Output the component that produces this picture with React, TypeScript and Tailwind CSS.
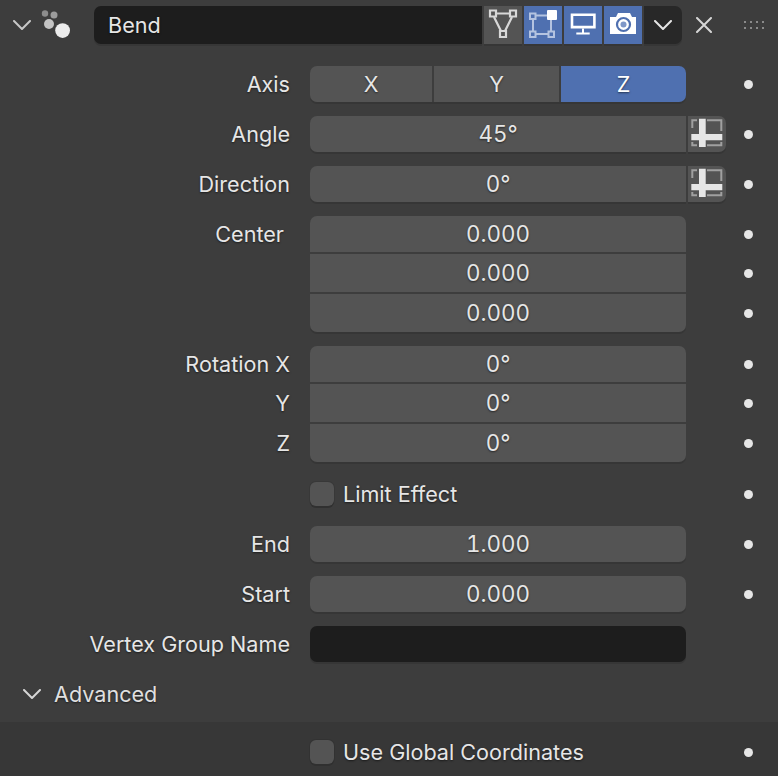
import type { ReactNode } from "react"

const textShadow = "[text-shadow:0_1px_2px_rgba(0,0,0,0.55)]"
const field = "bg-[#545454] shadow-[0_2px_0_#363636]"
const numbers = "text-[22.4px] tabular-nums"

function Chevron({ className }: { className: string }) {
  return (
    <svg viewBox="0 0 18 10" className={className} fill="none" stroke="currentColor" strokeWidth="2" strokeLinecap="round" strokeLinejoin="round">
      <path d="M1 1l8 8 8-8" />
    </svg>
  )
}

function Dot({ show = true }: { show?: boolean }) {
  return (
    <div className="ml-auto mr-[8px] flex w-[44px] shrink-0 justify-center">
      {show && <div className="h-[9px] w-[9px] rounded-full bg-[#e6e6e6]" />}
    </div>
  )
}

function Label({ children, className = "" }: { children?: ReactNode; className?: string }) {
  return <div className={`w-[290px] shrink-0 text-right text-[#e6e6e6] ${textShadow} ${className}`}>{children}</div>
}

function Row({ label, children, dot = true }: { label?: string; children: ReactNode; dot?: boolean }) {
  return (
    <div className="flex h-[36px] items-center">
      <Label>{label}</Label>
      <div className="ml-[20px] flex items-center">{children}</div>
      <Dot show={dot} />
    </div>
  )
}

function NumberField({ value, decorated }: { value: string; decorated?: boolean }) {
  return (
    <div className="flex w-[416px] items-center">
      <div className={`flex h-[36px] w-[376px] items-center justify-center rounded-[7px] text-[#e6e6e6] ${numbers} ${field} ${textShadow} ${decorated ? "rounded-r-none" : ""}`}>
        {value}
      </div>
      {decorated && <Decorator />}
    </div>
  )
}

function Decorator() {
  return (
    <div className={`ml-[2px] h-[36px] w-[38px] rounded-r-[7px] ${field}`}>
      <svg viewBox="0 0 38 36" className="h-[36px] w-[38px]">
        <path d="M4.300 12V4.300H9M19 4.300H33.300V15M33.300 26V29.300H19M9 29.300H4.300V26" fill="none" stroke="#a0a0a0" strokeWidth="2" />
        <path d="M11 2.700h6.700V18h16.600v6.300H17.700V31H11v-6.700H3.300V18H11z" fill="#e6e6e6" />
      </svg>
    </div>
  )
}

function StackedRow({ label, value, position, labelClass = "" }: { label?: string; value: string; position: "top" | "middle" | "bottom"; labelClass?: string }) {
  const corners = position === "top" ? "rounded-t-[7px] h-[36px]" : position === "bottom" ? "rounded-b-[7px] h-[38px] shadow-[0_2px_0_#363636]" : "h-[38px]"
  return (
    <div className="flex items-center">
      <Label className={labelClass}>{label}</Label>
      <div className={`ml-[20px] flex w-[376px] shrink-0 items-center justify-center bg-[#545454] text-[#e6e6e6] ${numbers} ${corners} ${textShadow}`}>{value}</div>
      <Dot />
    </div>
  )
}

function Stack({ first, rows, labelClass }: { first: string; rows: { label?: string; value: string }[]; labelClass?: string }) {
  return (
    <div className="flex flex-col gap-[2px]">
      {rows.map((r, i) => (
        <StackedRow key={i} labelClass={i === 0 ? labelClass : ""} label={i === 0 ? first : r.label} value={r.value} position={i === 0 ? "top" : i === rows.length - 1 ? "bottom" : "middle"} />
      ))}
    </div>
  )
}

function CheckRow({ label }: { label: string }) {
  return (
    <div className="flex h-[36px] items-center">
      <div className="w-[290px] shrink-0" />
      <div className="ml-[20px] flex w-[416px] shrink-0 items-center">
        <div className="h-[24px] w-[24px] rounded-[6px] bg-[#545454] shadow-[0_2px_0_#303030,0_0_0_1px_rgba(0,0,0,0.08)]" />
        <span className={`ml-[9px] text-[#e6e6e6] ${textShadow}`}>{label}</span>
      </div>
      <Dot />
    </div>
  )
}

function ModeButton({ active, children }: { active?: boolean; children: ReactNode }) {
  return (
    <div className={`h-[38px] w-[38px] shadow-[0_2px_0_#363636] ${active ? "bg-[#4f70b0]" : "bg-[#545454]"}`}>
      <svg viewBox="0 0 38 38" className="h-[38px] w-[38px]">{children}</svg>
    </div>
  )
}

function Header() {
  return (
    <div className="flex h-[38px] items-center">
      <Chevron className="ml-[13px] h-[10px] w-[18px] text-[#c8c8c8]" />
      <svg viewBox="0 0 32 30" className="ml-[9px] h-[30px] w-[32px]">
        <circle cx="5" cy="3.500" r="3.200" fill="#8c8c8c" />
        <circle cx="14" cy="5" r="3.500" fill="#9c9c9c" />
        <circle cx="9" cy="14" r="5" fill="#c4c4c4" />
        <circle cx="22.600" cy="20.600" r="7.400" fill="#ececec" />
      </svg>
      <div className={`ml-[22px] flex h-[38px] w-[388px] items-center rounded-l-[7px] bg-[#1d1d1d] pl-[14px] text-[#e6e6e6] shadow-[0_2px_0_#363636] ${textShadow}`}>
        Bend
      </div>
      <div className="ml-[2px] flex gap-[2px]">
        <ModeButton>
          <path d="M12 7.500h14M10 11l7 14M28 11l-7 14" stroke="#d8d8d8" strokeWidth="2.200" />
          <path d="M6 4.500h6v6H6zM26 4.500h6v6h-6zM16 25h6v6h-6z" fill="#545454" stroke="#d8d8d8" strokeWidth="2.200" />
        </ModeButton>
        <ModeButton active>
          <path d="M9 13v12M12 9.500h11M12 28h12M27 14v11" stroke="#b4c3e0" strokeWidth="2" />
          <path d="M6 7.500h5.500v5.500H6zM6 25.500h5.500V31H6zM24.500 25.500H30V31h-5.500z" fill="none" stroke="#b4c3e0" strokeWidth="2" />
          <rect x="23" y="4" width="10" height="10" rx="1" fill="#ffffff" />
        </ModeButton>
        <ModeButton active>
          <path d="M8 8.700h22.400v12.400H8z" fill="none" stroke="#ffffff" strokeWidth="2.600" />
          <path d="M19 22.400v5M12.300 27.500h13.400" stroke="#ffffff" strokeWidth="2" />
        </ModeButton>
        <ModeButton active>
          <path d="M6 11h6l2-4h12l2 4h4v17H6z" fill="#ffffff" />
          <circle cx="19.500" cy="18.500" r="6.500" fill="none" stroke="#4f70b0" strokeWidth="2.200" />
          <circle cx="19.500" cy="18.500" r="3" fill="#7f98c8" />
        </ModeButton>
      </div>
      <div className="ml-[2px] flex h-[38px] w-[38px] items-center justify-center rounded-r-[7px] bg-[#282828] shadow-[0_2px_0_#363636]">
        <Chevron className="h-[10px] w-[18px] text-[#e6e6e6]" />
      </div>
      <svg viewBox="0 0 16 16" className="ml-[14px] h-[16px] w-[16px]" fill="none" stroke="#d6d6d6" strokeWidth="2" strokeLinecap="round">
        <path d="M1 1l14 14M15 1L1 15" />
      </svg>
      <svg viewBox="0 0 20 8" className="ml-[32px] h-[8px] w-[20px]" fill="#8a8a8a">
        <path d="M0 0h2v2H0zM6 0h2v2H6zM12 0h2v2h-2zM18 0h2v2h-2zM0 6h2v2H0zM6 6h2v2H6zM12 6h2v2h-2zM18 6h2v2h-2z" />
      </svg>
    </div>
  )
}

export default function App() {
  return (
    <div className="h-[776px] w-[778px] overflow-hidden bg-[#3d3d3d] pt-[6px] font-['Inter',sans-serif] text-[21.6px]">
      <Header />
      <div className="mt-[22px] flex flex-col gap-[14px]">
        <Row label="Axis">
          <div className={`flex w-[376px] gap-[2px] overflow-hidden rounded-[7px] text-center text-[#e6e6e6] ${textShadow} shadow-[0_2px_0_#363636]`}>
            <div className="flex h-[36px] w-[122px] items-center justify-center bg-[#545454]">X</div>
            <div className="flex h-[36px] w-[125px] items-center justify-center bg-[#545454]">Y</div>
            <div className="flex h-[36px] flex-1 items-center justify-center bg-[#4f70b0] text-white">Z</div>
          </div>
        </Row>
        <Row label="Angle"><NumberField value="45°" decorated /></Row>
        <Row label="Direction"><NumberField value="0°" decorated /></Row>
        <Stack first="Center" labelClass="pr-[6px]" rows={[{ value: "0.000" }, { value: "0.000" }, { value: "0.000" }]} />
        <Stack first="Rotation X" rows={[{ value: "0°" }, { label: "Y", value: "0°" }, { label: "Z", value: "0°" }]} />
        <CheckRow label="Limit Effect" />
        <Row label="End"><NumberField value="1.000" /></Row>
        <Row label="Start"><NumberField value="0.000" /></Row>
        <Row label="Vertex Group Name" dot={false}>
          <div className="h-[36px] w-[376px] rounded-[7px] bg-[#1d1d1d] shadow-[0_2px_0_#363636]" />
        </Row>
      </div>
      <div className="mt-[14px] flex h-[36px] items-center pl-[23px]">
        <Chevron className="h-[10px] w-[18px] text-[#d6d6d6]" />
        <span className={`ml-[13px] text-[#e0e0e0] ${textShadow}`}>Advanced</span>
      </div>
      <div className="mt-[10px] h-[54px] bg-[#373737] pt-[12px]">
        <CheckRow label="Use Global Coordinates" />
      </div>
    </div>
  )
}
